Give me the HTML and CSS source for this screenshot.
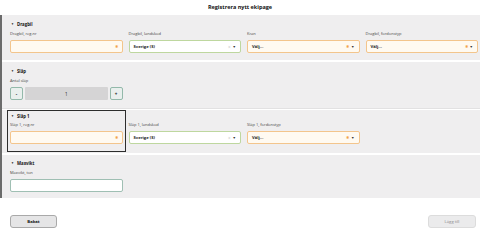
FILE: index.html
```html
<!DOCTYPE html>
<html lang="sv">
<head>
    <meta charset="UTF-8">
    <title>Registrera nytt ekipage</title>
    <link rel="stylesheet" href="styles.css">
</head>
<body>
    <div class="page-title">Registrera nytt ekipage</div>

    <div class="form-body">
        <!-- Dragbil -->
        <div class="section">
            <div class="section-head"><span class="caret">&#9660;</span>Dragbil</div>
            <div class="row">
                <div class="field">
                    <div class="label">Dragbil, reg.nr</div>
                    <div class="input required"><span class="star">&#10033;</span></div>
                </div>
                <div class="field">
                    <div class="label">Dragbil, landskod</div>
                    <div class="input select valid"><span class="value">Sverige (S)</span><span class="clear">&times;</span><span class="arrow">&#9660;</span></div>
                </div>
                <div class="field">
                    <div class="label">Kran</div>
                    <div class="input select required"><span class="value">Välj...</span><span class="star">&#10033;</span><span class="arrow">&#9660;</span></div>
                </div>
                <div class="field">
                    <div class="label">Dragbil, fordonstyp</div>
                    <div class="input select required"><span class="value">Välj...</span><span class="star">&#10033;</span><span class="arrow">&#9660;</span></div>
                </div>
            </div>
        </div>

        <!-- Släp -->
        <div class="section slap">
            <div class="section-head"><span class="caret">&#9660;</span>Släp</div>
            <div class="row">
                <div class="field">
                    <div class="label">Antal släp</div>
                    <div class="stepper">
                        <div class="step-btn">-</div>
                        <div class="step-value">1</div>
                        <div class="step-btn">+</div>
                    </div>
                </div>
            </div>
        </div>

        <!-- Släp 1 -->
        <div class="section slap-one">
            <div class="row">
                <div class="field focused">
                    <div class="section-head"><span class="caret">&#9660;</span>Släp 1</div>
                    <div class="label">Släp 1, reg.nr</div>
                    <div class="input required"><span class="star">&#10033;</span></div>
                </div>
                <div class="field">
                    <div class="label">Släp 1, landskod</div>
                    <div class="input select valid"><span class="value">Sverige (S)</span><span class="clear">&times;</span><span class="arrow">&#9660;</span></div>
                </div>
                <div class="field">
                    <div class="label">Släp 1, fordonstyp</div>
                    <div class="input select required"><span class="value">Välj...</span><span class="star">&#10033;</span><span class="arrow">&#9660;</span></div>
                </div>
            </div>
        </div>

        <!-- Maxvikt -->
        <div class="section maxvikt">
            <div class="section-head"><span class="caret">&#9660;</span>Maxvikt</div>
            <div class="row">
                <div class="field">
                    <div class="label">Maxvikt, ton</div>
                    <div class="input plain"></div>
                </div>
            </div>
        </div>
    </div>

    <div class="footer">
        <button class="button back">Bakåt</button>
        <button class="button add" disabled>Lägg till</button>
    </div>
</body>
</html>
```

FILE: styles.css
```css
body {
    margin: 0;
    width: 480px;
    height: 240px;
    overflow: hidden;
    background: #ffffff;
    font-family: "Open Sans", "Liberation Sans", sans-serif;
    color: #222;
}

.page-title {
    height: 15px;
    line-height: 14px;
    text-align: center;
    font-size: 5.5px;
    font-weight: bold;
    color: #111;
}

.form-body {
    border-left: 2px solid #6b6b6b;
    display: flex;
    flex-direction: column;
    gap: 2px;
}

.section {
    background: #efeeef;
    padding: 6px 2px 7px 8px;
}
.section.slap {
    padding-bottom: 8px;
    border-bottom: 1px solid #e2e1e2;
}
.section.slap-one {
    padding-top: 3px;
    padding-bottom: 4px;
    margin-top: -1px;
}
.section.maxvikt {
    padding-top: 5px;
    padding-bottom: 6px;
}

.section-head {
    height: 6px;
    line-height: 6px;
    font-size: 4.3px;
    font-weight: bold;
    margin-bottom: 4px;
    color: #111;
}
.caret {
    font-size: 3px;
    margin: 0 3px 0 1px;
    vertical-align: 1px;
}

.row {
    display: grid;
    grid-template-columns: repeat(4, 1fr);
    gap: 6px;
}

.field.focused {
    outline: 1.5px solid #2d2d2d;
    outline-offset: 2px;
    padding-bottom: 5px;
}
.field.focused .section-head {
    margin-bottom: 3px;
}
.slap-one .field:not(.focused) {
    padding-top: 9px;
}

.label {
    height: 6px;
    line-height: 6px;
    font-size: 4px;
    color: #444;
    margin-bottom: 3px;
}

.input {
    height: 13px;
    box-sizing: border-box;
    border: 1px solid #ccc;
    border-radius: 2px;
    display: flex;
    align-items: center;
    padding: 0 4px;
    font-size: 4.2px;
    font-weight: bold;
}
.input.required {
    border-color: #f3c58c;
    background: #fffaf1;
    justify-content: flex-end;
}
.input.select {
    justify-content: flex-start;
}
.input.valid {
    border-color: #bed79f;
    background: #ffffff;
}
.input.plain {
    border-color: #9fbfb3;
    background: #ffffff;
}
.input .value {
    flex: 1;
}
.star {
    color: #f2a24a;
    font-size: 4px;
    font-weight: normal;
}
.clear {
    color: #c4c4c4;
    font-size: 4.5px;
    font-weight: normal;
}
.arrow {
    font-size: 3.5px;
    margin-left: 2px;
    color: #333;
}

.stepper {
    display: flex;
    gap: 2px;
    height: 13px;
}
.step-btn {
    width: 13px;
    box-sizing: border-box;
    border: 1px solid #93b9aa;
    border-radius: 2px;
    background: #e9efed;
    font-size: 4.5px;
    font-weight: bold;
    display: flex;
    align-items: center;
    justify-content: center;
}
.step-value {
    flex: 1;
    background: #d5d4d5;
    border-radius: 1px;
    font-size: 4.5px;
    display: flex;
    align-items: center;
    justify-content: center;
}

.footer {
    display: flex;
    justify-content: space-between;
    padding: 17px 4px 0 10px;
}
.button {
    width: 47px;
    height: 13px;
    border-radius: 3px;
    font-family: "Open Sans", "Liberation Sans", sans-serif;
    font-size: 4.2px;
    font-weight: bold;
    padding: 0;
}
.button.back {
    background: #e5e5e6;
    border: 1px solid #a9a9a9;
    color: #111;
}
.button.add {
    width: 48px;
    background: #ebebec;
    border: 1px solid #dcdcdc;
    color: #8a8a8a;
    font-weight: normal;
}
```
